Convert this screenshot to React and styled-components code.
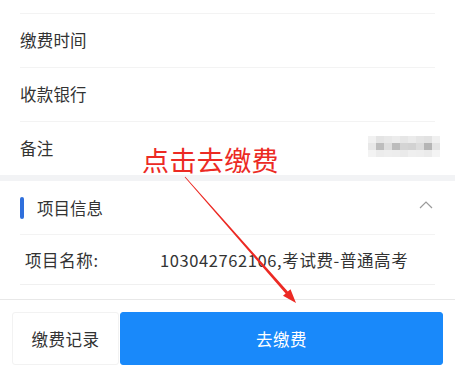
import React from 'react'
import styled, { createGlobalStyle } from 'styled-components';

const GlobalStyle = createGlobalStyle`
  html, body {
    margin: 0;
    padding: 0;
    background: #ffffff;
  }
  body {
    font-family: "Noto Sans CJK SC", "Noto Sans", sans-serif;
  }
`;

const Page = styled.div`
  position: relative;
  width: 455px;
  height: 376px;
  overflow: hidden;
  background: #fff;
  display: flex;
  flex-direction: column;
`;

const Section = styled.div`
  background: #fff;
  padding: 0 20px;
`;

const Gap = styled.div`
  height: 6px;
  background: #f2f3f5;
`;

const Cell = styled.div`
  height: ${p => p.h || 53}px;
  display: flex;
  align-items: center;
  justify-content: space-between;
  border-bottom: ${p => p.last ? 'none' : '1px solid #f3f3f3'};
`;

const Label = styled.span`
  font-size: 16.5px;
  color: #333;
  letter-spacing: 0.2px;
  margin-top: -2px;
`;

const Mosaic = styled.div`
  display: grid;
  grid-template-columns: repeat(9, 8px);
  grid-auto-rows: 7px;
  margin-right: -5px;
  margin-top: -4px;
`;

const Tile = styled.div`
  background: ${p => p.c};
`;

const Head = styled.div`
  height: 53px;
  display: flex;
  align-items: center;
  border-bottom: 1px solid #f3f3f3;
`;

const Bar = styled.div`
  width: 4px;
  height: 22px;
  border-radius: 2px;
  background: #2f6fdc;
  margin-right: 13px;
`;

const Title = styled.span`
  flex: 1;
  font-size: 16.5px;
  color: #333;
`;

const Chevron = styled.svg`
  width: 14px;
  height: 9px;
  margin-right: 2px;
  margin-top: -6px;
`;

const Info = styled.div`
  height: 49px;
  display: flex;
  align-items: center;
  padding-left: 5px;
  border-bottom: 1px solid #f0f0f0;
`;

const InfoKey = styled.span`
  width: 135px;
  font-size: 16.5px;
  color: #333;
  letter-spacing: 0.6px;
`;

const InfoVal = styled.span`
  font-size: 16.5px;
  color: #333;
  letter-spacing: 0.6px;
`;

const Rest = styled.div`
  height: 14px;
`;

const Footer = styled.div`
  border-top: 1px solid #e8e8e8;
  padding: 12px 12px 0;
  display: flex;
  gap: 1px;
  background: #fff;
  flex: 1;
`;

const Button = styled.button`
  height: 53px;
  border-radius: 3px;
  font-family: inherit;
  font-size: 16.5px;
  cursor: pointer;
  border: 1px solid ${p => p.primary ? '#1989fa' : '#f2f2f2'};
  background: ${p => p.primary ? '#1989fa' : '#fff'};
  color: ${p => p.primary ? '#fff' : '#333'};
  flex: ${p => p.primary ? 1 : 'none'};
  width: ${p => p.primary ? 'auto' : '107px'};
  letter-spacing: 0.5px;
`;

const Note = styled.div`
  position: absolute;
  left: 142px;
  top: 141px;
  font-size: 27px;
  color: #ec2a24;
  letter-spacing: 0.4px;
  line-height: 1.4;
`;

const Arrow = styled.svg`
  position: absolute;
  left: 0;
  top: 0;
  pointer-events: none;
`;

const shades = [
  ['#f1f1f1', '#e4e4e4', '#e8e8e8', '#ececec', '#e6e6e6', '#ebebeb', '#e5e5e5', '#e2e2e2', '#f0f0f0'],
  ['#e8e8e8', '#bdbdbd', '#dedede', '#bcbcbc', '#d4d4d4', '#d2d2d2', '#dcdcdc', '#b5b5b5', '#e4e4e4'],
  ['#f3f3f3', '#ececec', '#eeeeee', '#ededed', '#eaeaea', '#efefef', '#eeeeee', '#ebebeb', '#f4f4f4'],
];

export default function App() {
  return (
    <Page>
      <GlobalStyle />
      <Section>
        <Cell h={13} />
        <Cell><Label>缴费时间</Label></Cell>
        <Cell><Label>收款银行</Label></Cell>
        <Cell last>
          <Label>备注</Label>
          <Mosaic>
            {shades.flat().map((c, i) => <Tile key={i} c={c} />)}
          </Mosaic>
        </Cell>
      </Section>
      <Gap />
      <Section>
        <Head>
          <Bar />
          <Title>项目信息</Title>
          <Chevron viewBox="0 0 14 9">
            <polyline points="1,8 7,2 13,8" fill="none" stroke="#9a9a9a" strokeWidth="1.2" />
          </Chevron>
        </Head>
        <Info>
          <InfoKey>项目名称:</InfoKey>
          <InfoVal>103042762106,考试费-普通高考</InfoVal>
        </Info>
        <Rest />
      </Section>
      <Footer>
        <Button>缴费记录</Button>
        <Button primary>去缴费</Button>
      </Footer>
      <Note>点击去缴费</Note>
      <Arrow width="455" height="376" viewBox="0 0 455 376">
        <polygon
          points="185.3,176.7 287.8,291.5 290.5,289.2 296,303 283,295.8 285.6,293.5 184.7,177.3"
          fill="#ec2a24"
        />
      </Arrow>
    </Page>
  )
}
